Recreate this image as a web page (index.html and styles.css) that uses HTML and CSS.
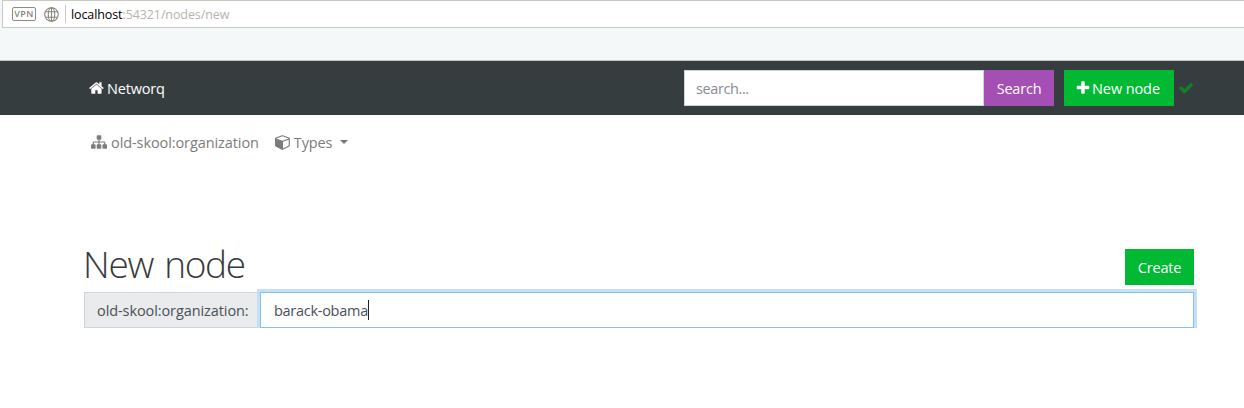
FILE: index.html
```html
<!DOCTYPE html>
<html lang="en">
<head>
<meta charset="utf-8">
<title>New node</title>
<link rel="stylesheet" href="styles.css">
</head>
<body>
<div class="chrome">
  <div class="address">
    <span class="vpn">VPN</span>
    <svg class="globe" viewBox="0 0 14 14"><circle cx="7" cy="7" r="6.300"/><ellipse cx="7" cy="7" rx="3" ry="6.300"/><path d="M1 4.500h12M1 9.500h12M7 .7v12.600"/></svg>
    <span class="divider"></span>
    <span class="url"><span class="host">localhost</span><span class="path">:54321/nodes/new</span></span>
  </div>
</div>
<header class="navbar">
  <a class="brand"><svg class="icon" viewBox="0 0 1792 1792"><path d="M1408 992v480q0 26-19 45t-45 19h-384v-384h-256v384h-384q-26 0-45-19t-19-45v-480q0-1 .5-3t.5-3l575-474 575 474q1 2 1 6zm223-69l-62 74q-8 9-21 11h-3q-13 0-21-7l-692-577-692 577q-12 8-24 7-13-2-21-11l-62-74q-8-10-7-23.500t11-21.500l719-599q32-26 76-26t76 26l244 204v-195q0-14 9-23t23-9h192q14 0 23 9t9 23v408l219 182q10 8 11 21.500t-7 23.500z"/></svg><span class="brand-text">Networq</span></a>
  <div class="search"><span class="placeholder">search...</span></div>
  <a class="button search-button"><span class="search-text">Search</span></a>
  <a class="button new-button"><svg class="icon plus" viewBox="0 0 1792 1792"><path d="M1600 736v192q0 40-28 68t-68 28h-416v416q0 40-28 68t-68 28h-192q-40 0-68-28t-28-68v-416h-416q-40 0-68-28t-28-68v-192q0-40 28-68t68-28h416v-416q0-40 28-68t68-28h192q40 0 68 28t28 68v416h416q40 0 68 28t28 68z"/></svg><span class="new-text">New node</span></a>
  <svg class="icon check" viewBox="0 0 1792 1792"><path d="M1671 566q0 40-28 68l-724 724-136 136q-28 28-68 28t-68-28l-136-136-362-362q-28-28-28-68t28-68l136-136q28-28 68-28t68 28l294 295 656-657q28-28 68-28t68 28l136 136q28 28 28 68z"/></svg>
</header>
<nav class="subnav">
  <svg class="icon sitemap" viewBox="0 0 1792 1792"><path d="M1792 1248v320q0 40-28 68t-68 28h-320q-40 0-68-28t-28-68v-320q0-40 28-68t68-28h96v-192h-512v192h96q40 0 68 28t28 68v320q0 40-28 68t-68 28h-320q-40 0-68-28t-28-68v-320q0-40 28-68t68-28h96v-192h-512v192h96q40 0 68 28t28 68v320q0 40-28 68t-68 28h-320q-40 0-68-28t-28-68v-320q0-40 28-68t68-28h96v-192q0-52 38-90t90-38h512v-192h-96q-40 0-68-28t-28-68v-320q0-40 28-68t68-28h320q40 0 68 28t28 68v320q0 40-28 68t-68 28h-96v192h512q52 0 90 38t38 90v192h96q40 0 68 28t28 68z"/></svg>
  <span class="crumb">old-skool:organization</span>
  <svg class="icon cube" viewBox="0 0 1792 1792"><path d="M896 1629l640-349v-636l-640 233v752zm-64-865l698-254-698-254-698 254zm832-252v768q0 35-18 65t-49 47l-704 384q-28 16-61 16t-61-16l-704-384q-31-17-49-47t-18-65v-768q0-40 23-73t61-47l704-256q22-8 44-8t44 8l704 256q38 14 61 47t23 73z"/></svg>
  <span class="types">Types</span>
  <span class="caret"></span>
</nav>
<main class="content">
  <div class="title-row">
    <h1 class="title">New node</h1>
    <a class="button create-button"><span class="create-text">Create</span></a>
  </div>
  <div class="field">
    <div class="prefix"><span class="prefix-text">old-skool:organization:</span></div>
    <div class="value"><span class="value-text">barack-obama</span><span class="cursor"></span></div>
  </div>
</main>
</body>
</html>
```

FILE: styles.css
```css
* { box-sizing: border-box; }
body {
  margin: 0;
  background: #fff;
  color: #373a3c;
  font: 14.5px/24px "Open Sans", "Noto Sans", sans-serif;
  white-space: nowrap;
  overflow: hidden;
}
.chrome {
  height: 61px;
  padding-left: 2px;
  background: #f4f8f9;
  border-bottom: 1px solid #c5c7c1;
}
.address {
  display: flex;
  align-items: center;
  height: 28px;
  padding-left: 9px;
  background: #fff;
  border: 1px solid #c8c9c1;
  border-right: 0;
}
.vpn {
  width: 24px;
  height: 14px;
  border: 1px solid #8b8b82;
  border-radius: 2px;
  color: #85857c;
  font-size: 9px;
  font-weight: 600;
  line-height: 12px;
  text-align: center;
  letter-spacing: .5px;
}
.globe {
  width: 15px;
  height: 15px;
  margin-left: 8px;
  fill: none;
  stroke: #85857c;
}
.divider { width: 1px; height: 18px; margin: 0 5px 0 6px; background: #c8c8c8; }
.url { font-size: 12.5px; letter-spacing: -.1px; line-height: 24px; padding-top: 2px; }
.host { color: #000; }
.path { color: #b5b5ac; }
.icon { width: 16px; height: 16px; flex: none; fill: currentColor; }
.navbar {
  display: flex;
  align-items: center;
  height: 54px;
  padding: 0 50px 0 89px;
  background: #363d3f;
  color: #fff;
}
.brand { display: flex; align-items: center; gap: 2px; margin-right: auto; }
.brand-text { letter-spacing: -.2px; }
.brand-text, .button span, .value-text { padding-top: 2px; }
.search {
  width: 300px;
  height: 36px;
  padding: 6px 11px 0;
  border: 1px solid #ced4da;
  background: #fff;
  color: #868b90;
  letter-spacing: -.4px;
}
.button { display: flex; align-items: center; justify-content: center; height: 36px; color: #fff; }
.search-button { width: 70px; background: #a54eb3; letter-spacing: -.2px; }
.new-button { width: 110px; margin-left: 10px; padding-right: 3px; background: #02b933; gap: 1px; letter-spacing: -.1px; }
.check { color: #0d8125; margin-left: 4px; }
.subnav {
  display: flex;
  align-items: center;
  height: 55px;
  padding-left: 91px;
  color: #7c7c7b;
}
.crumb, .types { padding-top: 1px; }
.sitemap { margin: -1px 4px 0 0; }
.crumb { letter-spacing: -.09px; }
.cube { margin: -1px 3px 0 16px; }
.types { letter-spacing: -.15px; }
.caret { margin: -2px 0 0 8px; border: 4.5px solid transparent; border-top-color: #777; border-bottom: 0; }
.content { padding: 73px 50px 0 84px; }
.title-row { display: flex; justify-content: space-between; height: 49px; }
.title { margin: -1px 0 0 -1px; font-size: 37px; line-height: 44px; font-weight: 300; letter-spacing: -1.3px; word-spacing: 3px; }
.create-button { width: 69px; margin-top: 6px; background: #02b933; letter-spacing: -.15px; }
.field { display: flex; height: 36px; }
.prefix {
  width: 176px;
  padding: 6px 12px 0;
  border: 1px solid #ced4da;
  border-right: 0;
  background: #e9ebed;
  color: #495057;
  letter-spacing: -.09px;
}
.value {
  display: flex;
  flex: 1;
  align-items: center;
  padding-left: 13px;
  border: 1px solid #86c1eb;
  background: #fff;
  box-shadow: 0 0 0 3px #c3e0f7;
  color: #495057;
  letter-spacing: -.28px;
}
.cursor { width: 1px; height: 20px; background: #222; }
```
